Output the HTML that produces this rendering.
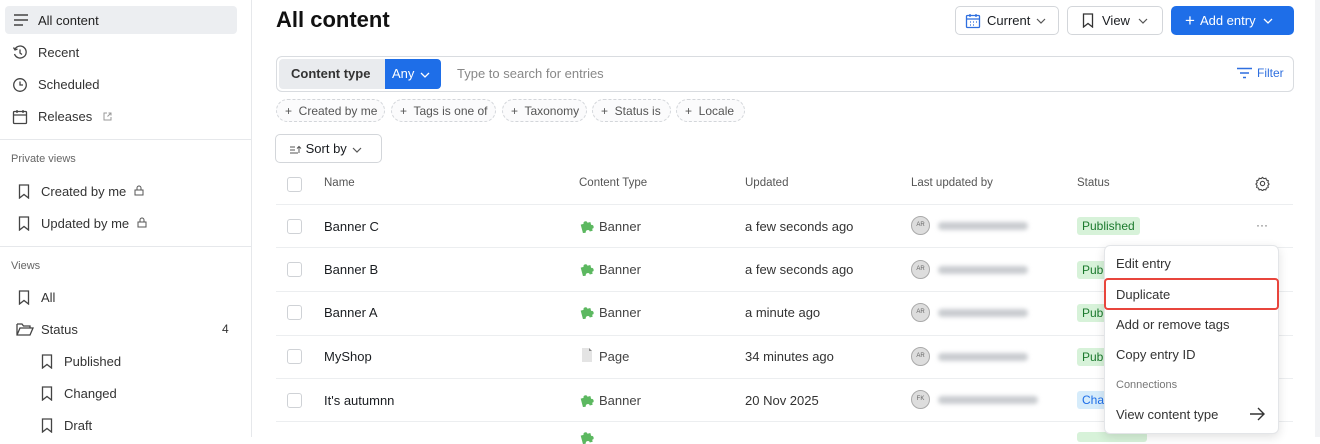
<!DOCTYPE html>
<html><head><style>
*{box-sizing:border-box;margin:0;padding:0}
body{width:1320px;height:437px;overflow:hidden;background:#fff;font-family:"Liberation Sans",sans-serif;color:#1a1d21;position:relative;font-size:13px}
.a{position:absolute}
.side{left:0;top:0;width:252px;height:437px;border-right:1px solid #e6e8eb}
.si{position:absolute;left:38px;font-size:13px;color:#333}
.sic{position:absolute}
.sec{position:absolute;left:11px;font-size:11px;color:#666}
.hr{position:absolute;left:0;width:251px;height:1px;background:#e6e8eb}
.btn{position:absolute;top:6px;height:29px;border:1px solid #d3d6da;border-radius:5px;background:#fff;font-size:13px;display:flex;align-items:center}
.chip{position:absolute;top:99px;height:23px;border:1px dashed #d3d6da;border-radius:12px;font-size:12px;color:#555;display:flex;align-items:center;padding-left:8px;background:#fbfbfc}
.th{position:absolute;top:177px;font-size:11.5px;color:#555}
.row{position:absolute;left:276px;width:1017px;height:1px;background:#eceef0}
.cb{position:absolute;left:287px;width:15px;height:15px;border:1px solid #cfd2d6;border-radius:3px}
.nm{position:absolute;left:324px;font-size:13px;color:#1a1d21}
.ct{position:absolute;left:599px;font-size:13px;color:#444}
.up{position:absolute;left:745px;font-size:13px;color:#333}
.av{position:absolute;left:911px;width:19px;height:19px;border-radius:50%;background:#ddd;border:1.5px solid #aaa;font-size:6px;color:#666;text-align:center;line-height:16px}
.blur{position:absolute;left:938px;width:90px;height:8px;background:#c9ccd0;border-radius:4px;filter:blur(2px)}
.pub{position:absolute;left:1077px;height:18px;background:#d7f2d9;color:#1b7a2d;font-size:12px;padding:2px 5px;border-radius:3px}
.pz{position:absolute;left:579px;width:16px;height:16px}
.mi{position:absolute;left:1116px;font-size:13px;color:#333}
.chev{display:inline-block;vertical-align:middle}
</style></head><body>
<div class="a side">
 <div class="a" style="left:5px;top:6px;width:232px;height:28px;background:#eceef1;border-radius:4px"></div>
 <svg class="sic" style="left:13px;top:13px" width="16" height="14" viewBox="0 0 16 14"><path d="M1 2h14M1 7h14M1 12h9" stroke="#444" stroke-width="1.4" fill="none"/></svg>
 <div class="si" style="top:13px;color:#222">All content</div>
 <svg class="sic" style="left:12px;top:45px" width="16" height="16" viewBox="0 0 16 16"><path d="M3 4a6 6 0 1 1-0.5 5" stroke="#444" stroke-width="1.3" fill="none"/><path d="M1.5 2.5L3 5l2.5-1M8 4.5V8l2 1.5" stroke="#444" stroke-width="1.3" fill="none"/></svg>
 <div class="si" style="top:45px">Recent</div>
 <svg class="sic" style="left:12px;top:77px" width="16" height="16" viewBox="0 0 16 16"><circle cx="8" cy="8" r="6.3" stroke="#444" stroke-width="1.3" fill="none"/><path d="M8 4.5V8h3" stroke="#444" stroke-width="1.3" fill="none"/></svg>
 <div class="si" style="top:77px">Scheduled</div>
 <svg class="sic" style="left:12px;top:109px" width="16" height="16" viewBox="0 0 16 16"><rect x="1.5" y="2.5" width="13" height="12" rx="1" stroke="#444" stroke-width="1.3" fill="none"/><path d="M1.5 6h13M5 1v3M11 1v3" stroke="#444" stroke-width="1.3"/></svg>
 <div class="si" style="top:109px">Releases</div>
 <svg class="sic" style="left:103px;top:112px" width="9" height="9" viewBox="0 0 9 9"><path d="M4 1H1v7h7V5M5.5 1H8v2.5M8 1L4.5 4.5" stroke="#999" stroke-width="1" fill="none"/></svg>
 <div class="hr" style="top:139px"></div>
 <div class="sec" style="top:153px">Private views</div>
 <svg class="sic" style="left:18px;top:184px" width="12" height="15" viewBox="0 0 12 15"><path d="M1.5 1h9v13L6 10.5 1.5 14z" stroke="#444" stroke-width="1.3" fill="none"/></svg>
 <div class="si" style="left:41px;top:184px">Created by me</div>
 <svg class="sic" style="left:134px;top:185px" width="10" height="11" viewBox="0 0 10 11"><rect x="1" y="5" width="8" height="5" stroke="#555" stroke-width="1" fill="none"/><path d="M3 5V3a2 2 0 0 1 4 0v2" stroke="#555" stroke-width="1" fill="none"/></svg>
 <svg class="sic" style="left:18px;top:216px" width="12" height="15" viewBox="0 0 12 15"><path d="M1.5 1h9v13L6 10.5 1.5 14z" stroke="#444" stroke-width="1.3" fill="none"/></svg>
 <div class="si" style="left:41px;top:216px">Updated by me</div>
 <svg class="sic" style="left:137px;top:217px" width="10" height="11" viewBox="0 0 10 11"><rect x="1" y="5" width="8" height="5" stroke="#555" stroke-width="1" fill="none"/><path d="M3 5V3a2 2 0 0 1 4 0v2" stroke="#555" stroke-width="1" fill="none"/></svg>
 <div class="hr" style="top:246px"></div>
 <div class="sec" style="top:260px">Views</div>
 <svg class="sic" style="left:18px;top:290px" width="12" height="15" viewBox="0 0 12 15"><path d="M1.5 1h9v13L6 10.5 1.5 14z" stroke="#444" stroke-width="1.3" fill="none"/></svg>
 <div class="si" style="left:41px;top:290px">All</div>
 <svg class="sic" style="left:16px;top:322px" width="18" height="15" viewBox="0 0 18 15"><path d="M1 2h5l1.5 2H14v2M1 2v11h13l3-7H4L1 13" stroke="#444" stroke-width="1.3" fill="none"/></svg>
 <div class="si" style="left:41px;top:322px">Status</div>
 <div class="si" style="left:222px;top:322px;font-size:12px">4</div>
 <svg class="sic" style="left:41px;top:354px" width="12" height="15" viewBox="0 0 12 15"><path d="M1.5 1h9v13L6 10.5 1.5 14z" stroke="#444" stroke-width="1.3" fill="none"/></svg>
 <div class="si" style="left:64px;top:354px">Published</div>
 <svg class="sic" style="left:41px;top:386px" width="12" height="15" viewBox="0 0 12 15"><path d="M1.5 1h9v13L6 10.5 1.5 14z" stroke="#444" stroke-width="1.3" fill="none"/></svg>
 <div class="si" style="left:64px;top:386px">Changed</div>
 <svg class="sic" style="left:41px;top:418px" width="12" height="15" viewBox="0 0 12 15"><path d="M1.5 1h9v13L6 10.5 1.5 14z" stroke="#444" stroke-width="1.3" fill="none"/></svg>
 <div class="si" style="left:64px;top:418px">Draft</div>
</div>
<div class="a" style="left:1315px;top:0;width:5px;height:437px;background:#f2f3f5"></div>

<div class="a" style="left:276px;top:7px;font-size:22px;font-weight:bold;color:#111">All content</div>
<div class="btn" style="left:955px;width:104px;padding-left:9px"><svg width="16" height="16" viewBox="0 0 16 16"><rect x="1.5" y="2.5" width="13" height="12" rx="1" stroke="#2f6fdf" stroke-width="1.3" fill="none"/><path d="M1.5 6h13M5 1v3M11 1v3" stroke="#2f6fdf" stroke-width="1.3"/><path d="M5 9h1M8 9h1M11 9h1M5 12h1M8 12h1" stroke="#2f6fdf" stroke-width="1.2"/></svg><span style="margin-left:6px">Current</span><svg class="chev" style="margin-left:6px" width="10" height="6" viewBox="0 0 10 6"><path d="M1 1l4 4 4-4" stroke="#555" stroke-width="1.2" fill="none"/></svg></div>
<div class="btn" style="left:1067px;width:96px;padding-left:14px"><svg width="12" height="15" viewBox="0 0 12 15"><path d="M1.5 1h9v13L6 10.5 1.5 14z" stroke="#333" stroke-width="1.3" fill="none"/></svg><span style="margin-left:8px">View</span><svg class="chev" style="margin-left:8px" width="10" height="6" viewBox="0 0 10 6"><path d="M1 1l4 4 4-4" stroke="#555" stroke-width="1.2" fill="none"/></svg></div>
<div class="btn" style="left:1171px;width:123px;background:#1e6ee8;border-color:#1e6ee8;color:#fff;padding-left:13px"><span style="font-size:17px;line-height:1">+</span><span style="margin-left:5px">Add entry</span><svg class="chev" style="margin-left:7px" width="10" height="6" viewBox="0 0 10 6"><path d="M1 1l4 4 4-4" stroke="#fff" stroke-width="1.3" fill="none"/></svg></div>

<div class="a" style="left:276px;top:56px;width:1018px;height:36px;border:1px solid #d9dce0;border-radius:6px"></div>
<div class="a" style="left:279px;top:59px;width:106px;height:30px;background:#e9ebee;border-radius:4px 0 0 4px;font-size:13px;font-weight:bold;color:#333;padding:7px 0 0 12px">Content type</div>
<div class="a" style="left:385px;top:59px;width:56px;height:30px;background:#1e6ee8;border-radius:0 4px 4px 0;color:#fff;font-size:13px;padding:7px 0 0 7px">Any <svg class="chev" style="margin-left:2px" width="10" height="6" viewBox="0 0 10 6"><path d="M1 1l4 4 4-4" stroke="#fff" stroke-width="1.3" fill="none"/></svg></div>
<div class="a" style="left:457px;top:66px;color:#888;font-size:13px">Type to search for entries</div>
<svg class="a" style="left:1236px;top:67px" width="17" height="12" viewBox="0 0 17 12"><path d="M1 1.5h15M4 6h9M7 10.5h3" stroke="#2f6fdf" stroke-width="1.4"/></svg>
<div class="a" style="left:1257px;top:66px;color:#2f6fdf;font-size:12px">Filter</div>

<div class="chip" style="left:276px;width:109px">+&nbsp; Created by me</div>
<div class="chip" style="left:391px;width:105px">+&nbsp; Tags is one of</div>
<div class="chip" style="left:502px;width:85px">+&nbsp; Taxonomy</div>
<div class="chip" style="left:592px;width:79px">+&nbsp; Status is</div>
<div class="chip" style="left:676px;width:69px">+&nbsp; Locale</div>

<div class="a" style="left:275px;top:134px;width:107px;height:29px;border:1px solid #d3d6da;border-radius:5px;font-size:13px;padding:6px 0 0 13px"><svg class="chev" width="13" height="10" viewBox="0 0 13 10"><path d="M1 2h5M1 5h5M1 8h8M10 8V1.5M8 3.5l2-2 2 2" stroke="#555" stroke-width="1" fill="none"/></svg> Sort by <svg class="chev" style="margin-left:2px" width="10" height="6" viewBox="0 0 10 6"><path d="M1 1l4 4 4-4" stroke="#555" stroke-width="1.2" fill="none"/></svg></div>

<div class="cb" style="top:177px"></div>
<div class="th" style="left:324px">Name</div>
<div class="th" style="left:579px">Content Type</div>
<div class="th" style="left:745px">Updated</div>
<div class="th" style="left:911px">Last updated by</div>
<div class="th" style="left:1077px">Status</div>
<svg class="a" style="left:1255px;top:176px" width="15" height="15" viewBox="0 0 16 16"><circle cx="8" cy="8" r="2.3" stroke="#444" stroke-width="1.2" fill="none"/><path d="M8 1.5l1.6 1.3 2-.4.7 1.9 1.9.7-.4 2L15 8.6l-1.3 1.6.4 2-1.9.7-.7 1.9-2-.4L8 15.7 6.4 14.4l-2 .4-.7-1.9-1.9-.7.4-2L1 8.6l1.3-1.6-.4-2 1.9-.7.7-1.9 2 .4z" stroke="#444" stroke-width="1.2" fill="none"/></svg>

<div class="row" style="top:204px"></div>
<div class="row" style="top:247px"></div>
<div class="row" style="top:291px"></div>
<div class="row" style="top:335px"></div>
<div class="row" style="top:378px"></div>
<div class="row" style="top:421px"></div>

<div class="cb" style="top:219px"></div><div class="nm" style="top:219px">Banner C</div>
<div class="cb" style="top:262px"></div><div class="nm" style="top:262px">Banner B</div>
<div class="cb" style="top:305px"></div><div class="nm" style="top:305px">Banner A</div>
<div class="cb" style="top:349px"></div><div class="nm" style="top:349px">MyShop</div>
<div class="cb" style="top:393px"></div><div class="nm" style="top:393px">It's autumnn</div>

<svg class="pz" style="top:217px" viewBox="0 0 16 16"><path d="M2 6h3a2 2 0 1 1 4 0h3v3a2 2 0 1 1 0 4v2H9a2 2 0 1 0-4 0H2z" fill="#5cb860" transform="rotate(-15 8 8)"/></svg><div class="ct" style="top:219px">Banner</div>
<svg class="pz" style="top:260px" viewBox="0 0 16 16"><path d="M2 6h3a2 2 0 1 1 4 0h3v3a2 2 0 1 1 0 4v2H9a2 2 0 1 0-4 0H2z" fill="#5cb860" transform="rotate(-15 8 8)"/></svg><div class="ct" style="top:262px">Banner</div>
<svg class="pz" style="top:303px" viewBox="0 0 16 16"><path d="M2 6h3a2 2 0 1 1 4 0h3v3a2 2 0 1 1 0 4v2H9a2 2 0 1 0-4 0H2z" fill="#5cb860" transform="rotate(-15 8 8)"/></svg><div class="ct" style="top:305px">Banner</div>
<svg class="pz" style="top:347px" viewBox="0 0 16 16"><path d="M3 1h7l3 3v11H3z" fill="#e4e4e4"/><path d="M10 1v3h3" fill="#888"/></svg><div class="ct" style="top:349px">Page</div>
<svg class="pz" style="top:391px" viewBox="0 0 16 16"><path d="M2 6h3a2 2 0 1 1 4 0h3v3a2 2 0 1 1 0 4v2H9a2 2 0 1 0-4 0H2z" fill="#5cb860" transform="rotate(-15 8 8)"/></svg><div class="ct" style="top:393px">Banner</div>
<svg class="pz" style="top:428px" viewBox="0 0 16 16"><path d="M2 6h3a2 2 0 1 1 4 0h3v3a2 2 0 1 1 0 4v2H9a2 2 0 1 0-4 0H2z" fill="#5cb860" transform="rotate(-15 8 8)"/></svg>

<div class="up" style="top:219px">a few seconds ago</div>
<div class="up" style="top:262px">a few seconds ago</div>
<div class="up" style="top:305px">a minute ago</div>
<div class="up" style="top:349px">34 minutes ago</div>
<div class="up" style="top:393px">20 Nov 2025</div>

<div class="av" style="top:216px">AR</div><div class="blur" style="top:222px"></div>
<div class="av" style="top:260px">AR</div><div class="blur" style="top:266px"></div>
<div class="av" style="top:303px">AR</div><div class="blur" style="top:309px"></div>
<div class="av" style="top:347px">AR</div><div class="blur" style="top:353px"></div>
<div class="av" style="top:390px">FK</div><div class="blur" style="top:396px;width:100px"></div>

<div class="pub" style="top:217px">Published</div>
<div class="pub" style="top:261px">Published</div>
<div class="pub" style="top:304px">Published</div>
<div class="pub" style="top:348px">Published</div>
<div class="pub" style="top:391px;background:#d6ecfb;color:#1e6ee8">Changed</div>
<div class="pub" style="top:432px;height:10px;width:70px"></div>
<div class="a" style="left:1256px;top:218px;color:#666;font-size:12px">···</div>

<div class="a" style="left:1104px;top:245px;width:175px;height:189px;background:#fff;border:1px solid #e3e5e8;border-radius:6px;box-shadow:0 3px 10px rgba(0,0,0,.12)"></div>
<div class="mi" style="top:256px">Edit entry</div>
<div class="a" style="left:1104px;top:278px;width:175px;height:32px;border:2.5px solid #e8453c;border-radius:4px"></div>
<div class="mi" style="top:287px">Duplicate</div>
<div class="mi" style="top:317px">Add or remove tags</div>
<div class="mi" style="top:347px">Copy entry ID</div>
<div class="mi" style="top:379px;font-size:11px;color:#777">Connections</div>
<div class="mi" style="top:407px">View content type</div>
<svg class="a" style="left:1249px;top:407px" width="17" height="14" viewBox="0 0 17 14"><path d="M1 7h14M9 1l6 6-6 6" stroke="#333" stroke-width="1.4" fill="none"/></svg>
</body></html>
